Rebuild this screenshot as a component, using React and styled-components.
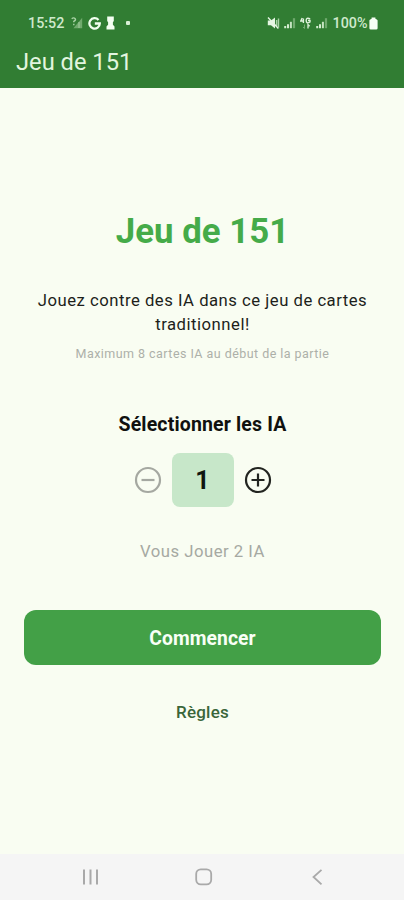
import React, { useState } from 'react';
import styled, { createGlobalStyle } from 'styled-components';

const MAX_PLAYERS = 6;

const MutedIcon = () => (
	<svg width="13" height="12" viewBox="0 0 13 12">
		<path d="M.8 3.600h3.200l4-3v10.800L4 8.200H.8z" fill="#e6f6e3" />
		<path d="M9.6 3v6M11.5 1.5v9" stroke="#a8d2a5" strokeWidth="1.4" />
		<path d="M1 .6l10.4 10.8" stroke="#e6f6e3" strokeWidth="1.4" />
	</svg>
);

const SignalIcon = () => (
	<svg width="12" height="12" viewBox="0 0 12 12">
		<path d="M1.2 9V11.200M4 7.3V11.200" stroke="#d4edd0" strokeWidth="2" />
		<path d="M6.9 4.8V11.200" stroke="#c5e4c1" strokeWidth="2" />
		<path d="M10 1.2V11.200" stroke="#6fa96d" strokeWidth="2.200" />
	</svg>
);

const NoSignalIcon = () => (
	<svg width="12" height="12" viewBox="0 0 12 12">
		<path d="M11.2.8v10.4H2.4z" fill="#70aa6d" />
		<path d="M.7 1.7Q2.6.2 4 1.5T2.8 4.3v1M2.8 6.8v1.5" fill="none" stroke="#a9d2a5" strokeWidth="1.4" />
		<path d="M8 5v6" stroke="#a3cda0" strokeWidth="1" />
	</svg>
);

const GoogleIcon = () => (
	<svg width="13" height="13" viewBox="0 0 12 12">
		<path d="M9.7 2.7A4.8 4.8 0 1 0 10.9 6H6.3" fill="none" stroke="#f2fff0" strokeWidth="2.1" />
	</svg>
);

const PawnIcon = () => (
	<svg width="9" height="14" viewBox="0 0 9 14">
		<path d="M1.200.6h6.600v4.400L6.900 6.200v2.600l1.600 1.800v2.900H.5v-2.900l1.600-1.800V6.200L1.200 5z" fill="#f4fff2" />
	</svg>
);

const DataIcon = () => (
	<svg width="12" height="13" viewBox="0 0 12 13">
		<path d="M2.2 1L.8 4h3M3.4 1.5V6M10.2 1.8Q6 .2 6.2 3.7T10 5V3.5H8" fill="none" stroke="#dff3dc" strokeWidth="1.4" />
		<path d="M4.5 7.5v4L3 10" fill="none" stroke="#77ad73" strokeWidth="1" />
		<path d="M8 11.5v-4l1.6 1.7" fill="none" stroke="#d2ebce" strokeWidth="1.4" />
	</svg>
);

const BatteryIcon = () => (
	<svg width="9" height="13" viewBox="0 0 9 13">
		<path d="M2.6.4h3.8v1.4l1.4.6q.8.4.8 1.2v7.6q0 1.4-1.4 1.4H1.8Q.4 12.6.4 11.2V3.6q0-.8.8-1.2l1.4-.6z" fill="#f6fff5" />
	</svg>
);

const CircleIcon = ({ plus }) => (
	<svg width="28" height="28" viewBox="0 0 28 28" fill="none" stroke="currentColor" strokeWidth="2.2">
		<circle cx="14" cy="14" r="12" />
		<path d={plus ? 'M7.5 14h13M14 7.5v13' : 'M7.5 14h13'} />
	</svg>
);

const RecentsIcon = () => (
	<svg width="18" height="18" viewBox="0 0 18 18">
		<path d="M3 1.5v15M9.5 1.5v15M16 1.5v15" stroke="#a9a9a9" strokeWidth="2" />
	</svg>
);

const HomeIcon = () => (
	<svg width="18" height="18" viewBox="0 0 18 18">
		<rect x="1.2" y="1.4" width="15" height="15" rx="4.6" fill="none" stroke="#a9a9a9" strokeWidth="1.8" />
	</svg>
);

const BackIcon = () => (
	<svg width="18" height="18" viewBox="0 0 18 18">
		<path d="M13.5 1.8L5.5 9l8 7.4" fill="none" stroke="#a9a9a9" strokeWidth="1.8" />
	</svg>
);

function App() {
	const [count, setCount] = useState(1);

	return (
		<Screen>
			<GlobalStyle />
			<Header>
				<StatusBar>
					<StatusLeft>
						<Clock>15:52</Clock>
						<NoSignalIcon />
						<GoogleIcon />
						<PawnIcon />
						<Dot />
					</StatusLeft>
					<StatusRight>
						<MutedIcon />
						<SignalIcon />
						<DataIcon />
						<SignalIcon />
						<Battery>100%</Battery>
						<BatteryIcon />
					</StatusRight>
				</StatusBar>
				<AppTitle>Jeu de 151</AppTitle>
			</Header>
			<Main>
				<Title>Jeu de 151</Title>
				<Description>Jouez contre des IA dans ce jeu de cartes traditionnel!</Description>
				<Hint>Maximum 8 cartes IA au début de la partie</Hint>
				<Label>Sélectionner les IA</Label>
				<Stepper>
					<StepButton aria-label="Moins" disabled={count <= 1} onClick={() => setCount(count - 1)}>
						<CircleIcon />
					</StepButton>
					<Count>{count}</Count>
					<StepButton aria-label="Plus" disabled={count >= MAX_PLAYERS} onClick={() => setCount(count + 1)}>
						<CircleIcon plus />
					</StepButton>
				</Stepper>
				<Summary>Vous Jouer {count + 1} IA</Summary>
				<StartButton>Commencer</StartButton>
				<RulesButton>Règles</RulesButton>
			</Main>
			<NavBar>
				<RecentsIcon />
				<HomeIcon />
				<BackIcon />
			</NavBar>
		</Screen>
	);
}

// ======== styles ==========
const GlobalStyle = createGlobalStyle`
	* {
		box-sizing: border-box;
	}

	body {
		margin: 0;
		font-family: Roboto, sans-serif;
	}

	button {
		border: 0;
		padding: 0;
		background: none;
		font-family: inherit;
	}

	svg {
		display: block;
		flex: none;
	}
`

const Screen = styled.div`
	display: flex;
	flex-direction: column;
	height: 900px;
	background: #f9fdf2;
`

const Header = styled.header`
	height: 88px;
	background: #317d33;
`

const StatusBar = styled.div`
	display: flex;
	justify-content: space-between;
	align-items: center;
	height: 46px;
	padding: 0 26px 0 28px;
	color: #cfe9cc;
	font-size: 14.3px;
	font-weight: 500;
`

const StatusLeft = styled.div`
	display: flex;
	align-items: center;
	gap: 5px;
`

const StatusRight = styled.div`
	display: flex;
	align-items: center;
	gap: 4px;
`

const Clock = styled.span`
	width: 38px;
`

const Battery = styled.span`
	margin-left: 1px;
	margin-right: -2.5px;
`

const Dot = styled.i`
	width: 4px;
	height: 4px;
	margin-left: 6px;
	border-radius: 1px;
	background: #d9f0d6;
`

const AppTitle = styled.div`
	padding: 1px 0 0 16px;
	color: #e2f5df;
	font-size: 23.7px;
	line-height: 30px;
`

const Main = styled.main`
	flex: 1;
	display: flex;
	flex-direction: column;
	align-items: center;
	padding: 122px 23px 0 24px;
	text-align: center;
`

const Title = styled.h1`
	margin: 0;
	color: #45ab49;
	font-size: 34.8px;
	font-weight: 700;
	line-height: 42px;
`

const Description = styled.p`
	margin: 37px 0 0;
	color: #1d1f1b;
	font-size: 16.7px;
	letter-spacing: 0.5px;
	line-height: 24px;
`

const Hint = styled.p`
	margin: 9px 0 0;
	color: #adb0a9;
	font-size: 12.5px;
	letter-spacing: 0.45px;
	line-height: 16px;
`

const Label = styled.h2`
	margin: 51px 0 0;
	color: #10110f;
	font-size: 19.5px;
	font-weight: 700;
	letter-spacing: 0.15px;
	line-height: 24px;
`

const Stepper = styled.div`
	display: flex;
	align-items: center;
	gap: 10px;
	margin-top: 16px;
`

const StepButton = styled.button`
	color: ${props => (props.disabled ? '#a5a8a1' : '#222420')};
`

const Count = styled.div`
	width: 62px;
	height: 54px;
	border-radius: 8px;
	background: #c7e7c9;
	color: #10150f;
	font-size: 25px;
	font-weight: 700;
	line-height: 55px;
`

const Summary = styled.p`
	margin: 35px 0 0;
	color: #a6a9a2;
	font-size: 16.7px;
	letter-spacing: 0.5px;
	line-height: 20px;
`

const StartButton = styled.button`
	align-self: stretch;
	height: 55px;
	margin-top: 48px;
	padding-top: 1px;
	border-radius: 12px;
	background: #43a047;
	color: #f8fff6;
	font-size: 19.3px;
	font-weight: 700;
	letter-spacing: 0.1px;
`

const RulesButton = styled.button`
	margin-top: 37px;
	color: #3a663a;
	font-size: 17px;
	font-weight: 500;
	letter-spacing: 0.2px;
	line-height: 20px;
`

const NavBar = styled.nav`
	display: flex;
	justify-content: space-between;
	align-items: center;
	height: 46px;
	padding: 0 78px 0 81px;
	background: #f5f5f5;
`

export default App;
